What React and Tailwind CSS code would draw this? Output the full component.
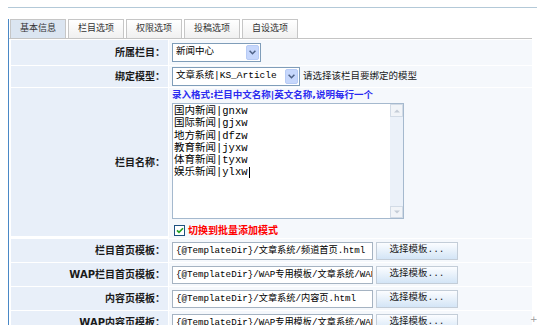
import React from 'react';

const UI = "font-['DejaVu_Sans','Noto_Sans_CJK_SC',sans-serif]";
const MONO = "font-['Liberation_Mono','Noto_Sans_CJK_SC',monospace]";

const tabs = ['基本信息', '栏目选项', '权限选项', '投稿选项', '自设选项'];

const columns = [
  '国内新闻|gnxw',
  '国际新闻|gjxw',
  '地方新闻|dfzw',
  '教育新闻|jyxw',
  '体育新闻|tyxw',
  '娱乐新闻|ylxw',
];

const templates = [
  ['栏目首页模板：', '{@TemplateDir}/文章系统/频道首页.html'],
  ['WAP栏目首页模板：', '{@TemplateDir}/WAP专用模板/文章系统/WAP频道首页.html'],
  ['内容页模板：', '{@TemplateDir}/文章系统/内容页.html'],
  ['WAP内容页模板：', '{@TemplateDir}/WAP专用模板/文章系统/WAP内容页.html'],
];

const Label = ({ children, height }) => (
  <div className={`flex items-center justify-end bg-[#e8eff9] pr-[3px] text-[10px] font-bold text-[#1a1a1a] ${height}`}>
    {children}
  </div>
);

const Value = ({ children, className = '' }) => (
  <div className={`flex bg-[#f5f8fc] pl-[3px] ${className}`}>{children}</div>
);

const Select = ({ value, width }) => (
  <div className={`flex h-[19px] items-center border border-[#7f9db9] bg-white ${width}`}>
    <span className={`flex-1 overflow-hidden whitespace-nowrap pl-[3px] text-[9.5px] text-black ${MONO}`}>
      {value}
    </span>
    <span className="mr-px flex h-[15px] w-[13px] items-center justify-center rounded-[2px] border border-[#b7cbf5] bg-[#c6d7fc]">
      <svg width="7" height="5" viewBox="0 0 7 5">
        <path d="M0.6 0.8 L3.5 3.7 L6.4 0.8" stroke="#4d6185" strokeWidth="1.5" fill="none" />
      </svg>
    </span>
  </div>
);

const TemplateInput = ({ value }) => (
  <div className="flex items-center gap-[3px]">
    <div className="h-[18px] w-[201px] overflow-hidden border border-[#a5b3c2] bg-white">
      <div className={`whitespace-nowrap pl-[3px] text-[9.2px] leading-[16px] text-black ${MONO}`}>{value}</div>
    </div>
    <button
      type="button"
      className={`h-[18px] w-[82px] border border-[#c3cdd8] bg-gradient-to-b from-[#fbfdff] to-[#d3e5f6] text-[9.5px] text-[#1a1a1a] ${MONO}`}
    >
      选择模板...
    </button>
  </div>
);

export default function App() {
  return (
    <div className={`relative h-[325px] w-[537px] overflow-hidden bg-white ${UI}`}>
      <div className="ml-2 mt-[7px] h-px bg-[#b3c9d8]" />

      <div className="ml-2 mt-[11px] w-[524px] border-l border-[#4a88c6]">
        {/* tab strip */}
        <div className="flex h-[19px] gap-[2px] pl-px">
          {tabs.map((tab, i) => (
            <div
              key={tab}
              className={`flex w-[56px] items-center justify-center border border-b-0 border-[#c6c6c6] text-[9px] text-[#333] ${
                i === 0 ? 'bg-[#dbe5f1]' : 'bg-gradient-to-b from-white to-[#f0f0f0]'
              }`}
            >
              {tab}
            </div>
          ))}
        </div>
        <div className="h-[2px] border-t border-[#c4c4c4] bg-white" />

        {/* form table */}
        <div className="grid grid-cols-[157px_1fr] gap-px bg-white pl-[2px]">
          <Label height="h-[25px]">所属栏目：</Label>
          <Value className="items-center">
            <Select value="新闻中心" width="w-[89px]" />
          </Value>

          <Label height="h-[21px]">绑定模型：</Label>
          <Value className="items-center gap-[3px]">
            <Select value="文章系统|KS_Article" width="w-[128px]" />
            <span className="text-[9.5px] text-[#1a1a1a]">请选择该栏目要绑定的模型</span>
          </Value>

          <Label height="h-[148px]">栏目名称：</Label>
          <Value className="flex-col">
            <div className="mt-px text-[9.5px] leading-[12px] font-bold text-[#2b2bf0]">
              录入格式:栏目中文名称|英文名称,说明每行一个
            </div>
            <div className="mt-[2px] flex h-[116px] w-[232px] border border-[#a5b9ce] bg-white">
              <div className={`flex-1 pl-[1px] pt-[1px] text-[10.5px] leading-[12.3px] text-black ${MONO}`}>
                {columns.map((line, i) => (
                  <div key={line}>
                    {line}
                    {i === columns.length - 1 && <span className="ml-px inline-block h-[11px] w-px bg-black align-middle" />}
                  </div>
                ))}
              </div>
              <div className="flex w-[13px] flex-col bg-[#ebf1f9]">
                <div className="flex h-[13px] items-center justify-center border border-[#d2dbe6] bg-[#f1f4f8]">
                  <svg width="6" height="4" viewBox="0 0 6 4">
                    <path d="M0 3.5 L3 0.5 L6 3.5 Z" fill="#c4ccd6" />
                  </svg>
                </div>
                <div className="flex-1" />
                <div className="flex h-[12px] items-center justify-center border border-[#d2dbe6] bg-[#f1f4f8]">
                  <svg width="6" height="4" viewBox="0 0 6 4">
                    <path d="M0 0.5 L3 3.5 L6 0.5 Z" fill="#c4ccd6" />
                  </svg>
                </div>
              </div>
            </div>
            <label className="mt-[4px] flex items-center gap-[3px] pl-[2px]">
              <span className="flex h-[11px] w-[11px] items-center justify-center border border-[#1c5180] bg-white">
                <svg width="8" height="7" viewBox="0 0 8 7">
                  <path d="M1 3.4 L3 5.4 L7 1.2" stroke="#21a121" strokeWidth="1.6" fill="none" />
                </svg>
              </span>
              <span className="text-[10px] font-bold text-[#ff0000]">切换到批量添加模式</span>
            </label>
          </Value>

          {templates.map(([label, value]) => (
            <React.Fragment key={label}>
              <Label height="h-[23px]">{label}</Label>
              <Value className="items-center">
                <TemplateInput value={value} />
              </Value>
            </React.Fragment>
          ))}
        </div>
      </div>

      <span className="absolute left-[530px] top-[313px] text-[9px] text-[#9a9a9a]">+</span>
    </div>
  );
}
